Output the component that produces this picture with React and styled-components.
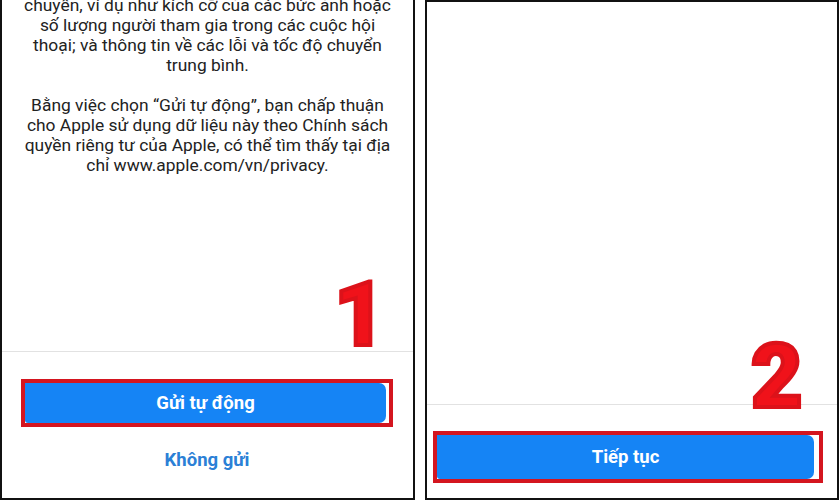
import React from "react";
import styled, { createGlobalStyle } from "styled-components";

const Global = createGlobalStyle`
  html, body { margin: 0; padding: 0; background: #fff; }
  #root { width: 840px; height: 500px; overflow: hidden; }
  * { box-sizing: border-box; }
`;

const Page = styled.div`
  width: 840px;
  height: 500px;
  display: flex;
  gap: 10px;
  background: #fff;
  font-family: Roboto, "Noto Sans", Arial, sans-serif;
`;

const Panel = styled.div`
  position: relative;
  width: ${(p) => p.$w}px;
  height: 500px;
  border: 2px solid #111;
  border-top-width: ${(p) => (p.$top ? 2 : 0)}px;
  display: flex;
  flex-direction: column;
  background: #fff;
  overflow: hidden;
`;

const Body = styled.div`
  height: ${(p) => p.$h}px;
  flex: none;
  overflow: hidden;
`;

const Prose = styled.div`
  margin-top: -5px;
  text-align: center;
  color: #222;
  font-size: 17.4px;
  line-height: 20px;
  white-space: nowrap;
`;

const Para = styled.p`
  margin: 0 0 20px;
`;

const Divider = styled.div`
  height: 1px;
  flex: none;
  background: #e2e2e2;
`;

const Footer = styled.div`
  flex: 1;
  display: flex;
  flex-direction: column;
  align-items: flex-start;
  padding: ${(p) => p.$pt}px 0 0 ${(p) => p.$pl}px;
`;

const Highlight = styled.div`
  width: ${(p) => p.$w}px;
  height: ${(p) => p.$h}px;
  border: 4px solid #d4151f;
  display: flex;
`;

const Primary = styled.div`
  flex: 1;
  margin-right: ${(p) => p.$mr || 0}px;
  background: #1584f5;
  border-radius: 0 7px 7px 3px;
  color: #fff;
  font-weight: 700;
  font-size: 18.5px;
  display: flex;
  align-items: center;
  justify-content: center;
`;

const Link = styled.div`
  margin-top: 22px;
  width: ${(p) => p.$w}px;
  text-align: center;
  color: #2b80d6;
  font-weight: 700;
  font-size: 18.5px;
  line-height: 22px;
`;

const Step = styled.div`
  position: absolute;
  left: ${(p) => p.$x}px;
  top: ${(p) => p.$y}px;
  font-family: Roboto, "Liberation Sans", Arial, sans-serif;
  font-weight: 900;
  font-size: 89px;
  line-height: 1;
  color: #f0121a;
  -webkit-text-stroke: 4px #dc121a;
`;

const lines1 = [
  "chuyển, ví dụ như kích cỡ của các bức ảnh hoặc",
  "số lượng người tham gia trong các cuộc hội",
  "thoại; và thông tin về các lỗi và tốc độ chuyển",
  "trung bình.",
];
const lines2 = [
  "Bằng việc chọn “Gửi tự động”, bạn chấp thuận",
  "cho Apple sử dụng dữ liệu này theo Chính sách",
  "quyền riêng tư của Apple, có thể tìm thấy tại địa",
  "chỉ www.apple.com/vn/privacy.",
];

const Lines = ({ items }) =>
  items.map((l, i) => (
    <React.Fragment key={i}>
      {l}
      {i < items.length - 1 && <br />}
    </React.Fragment>
  ));

export default function App() {
  return (
    <>
      <Global />
      <Page>
        <Panel $w={415}>
          <Body $h={351}>
            <Prose>
              <Para>
                <Lines items={lines1} />
              </Para>
              <Para>
                <Lines items={lines2} />
              </Para>
            </Prose>
          </Body>
          <Divider />
          <Footer $pt={27} $pl={19}>
            <Highlight $w={372} $h={48}>
              <Primary $mr={3}>Gửi tự động</Primary>
            </Highlight>
            <Link $w={372}>Không gửi</Link>
          </Footer>
          <Step $x={332} $y={270}>1</Step>
        </Panel>
        <Panel $w={414} $top>
          <Body $h={402} />
          <Divider />
          <Footer $pt={26} $pl={6}>
            <Highlight $w={390} $h={52}>
              <Primary $mr={5}>Tiếp tục</Primary>
            </Highlight>
          </Footer>
          <Step $x={324} $y={330}>2</Step>
        </Panel>
      </Page>
    </>
  );
}
